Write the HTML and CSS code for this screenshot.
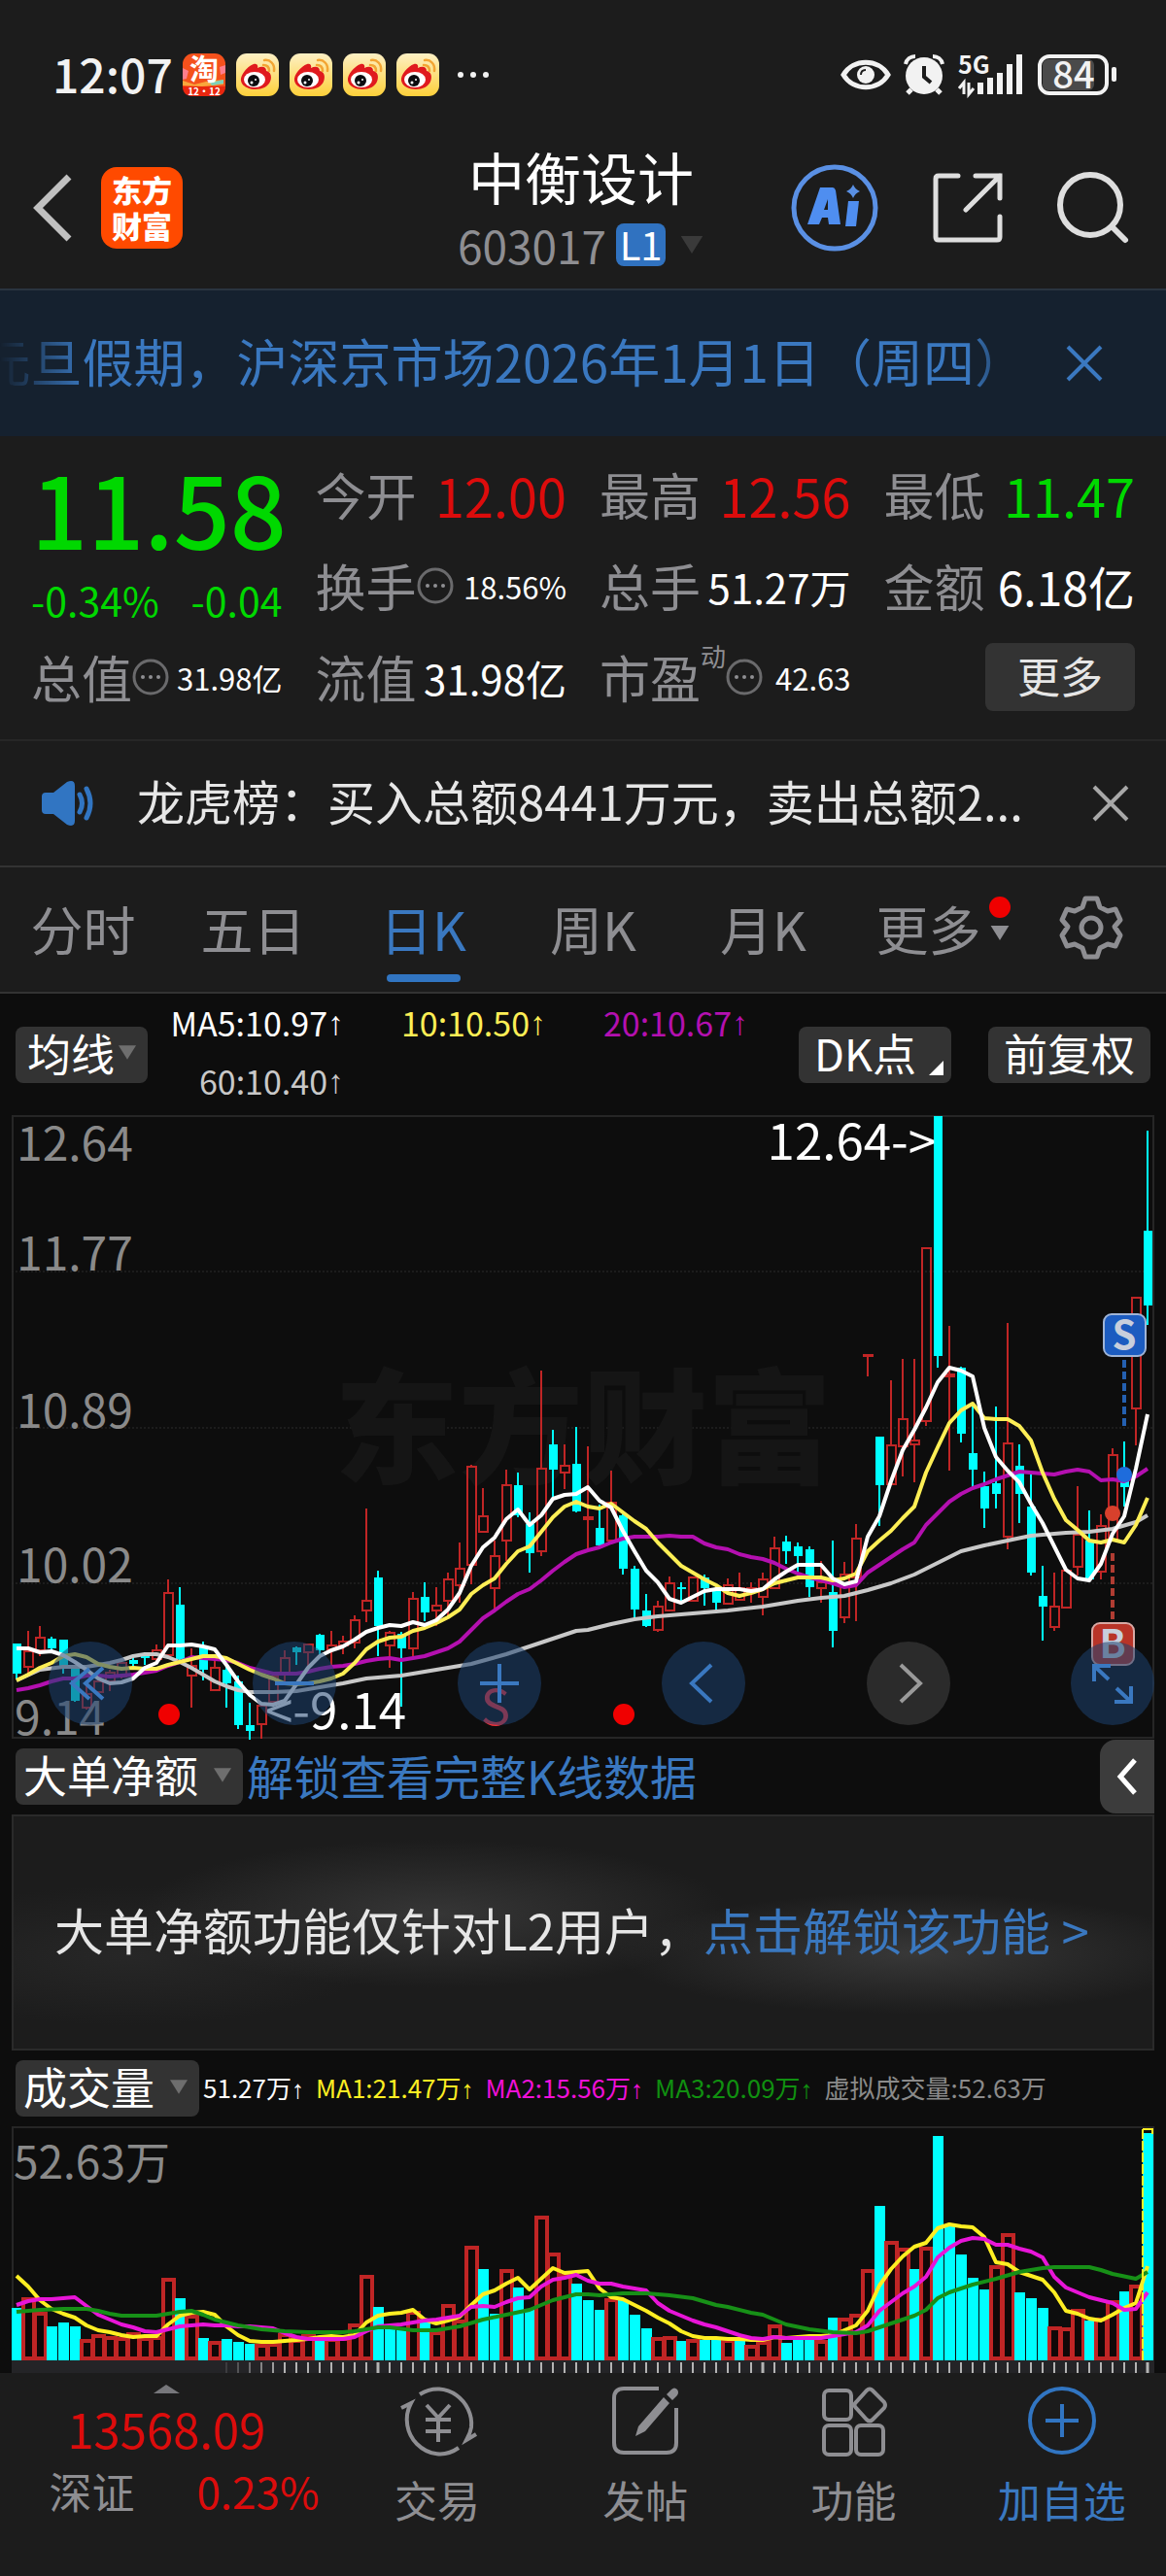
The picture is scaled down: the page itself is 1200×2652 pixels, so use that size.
FILE: index.html
```html
<!DOCTYPE html>
<html lang="zh-CN">
<head>
<meta charset="utf-8">
<meta name="viewport" content="width=device-width, initial-scale=1">
<title>中衡设计 603017</title>
<link rel="stylesheet" href="styles.css">
</head>
<body>
<svg class="defs" aria-hidden="true">
  <defs>
    <linearGradient id="gold" x1="0" y1="0" x2="0" y2="1"><stop offset="0" stop-color="#fdf0c4"/><stop offset="1" stop-color="#fdd03a"/></linearGradient>
    <symbol id="weibo" viewBox="0 0 44 44">
      <rect width="44" height="44" rx="11" fill="url(#gold)"/>
      <path d="M5 28C4 22 12 13 18 11c3-1 5 1 4 4 4-2 9-2 9 3 5 1 6 6 4 11-2 5-8 8-15 8S6 34 5 28z" fill="#e01a1e"/>
      <ellipse cx="19" cy="27" rx="11" ry="8" fill="#fff"/>
      <circle cx="18" cy="28" r="6" fill="#0c0c10"/><circle cx="16" cy="30" r="1.500" fill="#fff"/><circle cx="20" cy="27" r="1" fill="#fff"/>
      <path d="M29 7c6-1 11 4 10 11M28 12c4 0 6 2 6 6" fill="none" stroke="#f3a533" stroke-width="2.500" stroke-linecap="round"/>
    </symbol>
    <symbol id="info" viewBox="0 0 38 38"><circle cx="19" cy="19" r="17" fill="none" stroke="#6a6a6c" stroke-width="3"/><circle cx="11" cy="19" r="2" fill="#8e8e92"/><circle cx="19" cy="19" r="2" fill="#8e8e92"/><circle cx="27" cy="19" r="2" fill="#8e8e92"/></symbol>
    <symbol id="cross" viewBox="0 0 38 38"><path d="M2 2 36 36M36 2 2 36" fill="none" stroke="currentColor" stroke-width="4"/></symbol>
    <symbol id="caret" viewBox="0 0 20 16"><path d="M0 0h20L10 16z" fill="currentColor"/></symbol>
  </defs>
</svg>

<div class="status">
  <span class="clock">12:07</span>
  <div class="apps">
    <svg width="44" height="44" viewBox="0 0 44 44"><rect width="44" height="44" rx="11" fill="#f4511c"/><path d="M0 28 12 32 24 29 42 27v5L20 34 0 33z" fill="#f9a63c"/><path d="M28 30 42 27v4L30 33z" fill="#7fd0b8"/><path d="M0 15l6 3-2 8-4 1zM38 14l6-2v8l-5 2z" fill="#ff7d8c"/><path d="M0 34h44c0 7-4 10-11 10H11C4 44 0 41 0 34z" fill="#e8260f"/><text class="tao" x="22" y="27" text-anchor="middle">淘</text><text class="tao-day" x="22" y="43" text-anchor="middle">12·12</text></svg>
    <svg width="44" height="44"><use href="#weibo"/></svg>
    <svg width="44" height="44"><use href="#weibo"/></svg>
    <svg width="44" height="44"><use href="#weibo"/></svg>
    <svg width="44" height="44"><use href="#weibo"/></svg>
  </div>
  <svg class="dots" width="34" height="8" viewBox="0 0 34 8"><g fill="#f2f2f2"><circle cx="4" cy="4" r="3"/><circle cx="17" cy="4" r="3"/><circle cx="30" cy="4" r="3"/></g></svg>
  <div class="signals">
    <svg width="50" height="32" viewBox="0 0 50 32"><path d="M2 16C12-1 38-1 48 16 38 33 12 33 2 16z" fill="none" stroke="#f2f2f2" stroke-width="5"/><circle cx="25" cy="16" r="9" fill="#f2f2f2"/><path d="M20 16c0-3 2-5 5-5" stroke="#1c1c1c" stroke-width="2" fill="none"/></svg>
    <svg width="42" height="42" viewBox="0 0 42 42"><circle cx="21" cy="22" r="19" fill="#f2f2f2"/><path d="M2 10C3 5 7 2 12 2M40 10C39 5 35 2 30 2" stroke="#f2f2f2" stroke-width="4" fill="none"/><path d="M8 36l-4 4M34 36l4 4" stroke="#f2f2f2" stroke-width="5"/><path d="M21 12v11l7 6" stroke="#1c1c1c" stroke-width="4" fill="none"/></svg>
    <svg width="68" height="42" viewBox="0 0 68 42"><text class="net" x="0" y="20">5G</text><path d="M20 41V29h6v12zM30 41V24h6v17zM40 41V19h6v22zM50 41V10h6v31zM60 41V0h6v41z" fill="#f2f2f2"/><path d="M1 35l5-6v12M11 29v12l5-6" stroke="#f2f2f2" stroke-width="3" fill="none"/></svg>
    <svg width="82" height="42" viewBox="0 0 82 42"><rect x="5" y="5" width="53" height="32" rx="6" fill="#4a4a4a"/><rect x="2" y="2" width="69" height="38" rx="10" fill="none" stroke="#f2f2f2" stroke-width="4"/><rect x="76" y="13" width="5" height="15" rx="2" fill="#f2f2f2"/><text class="level" x="37" y="35" text-anchor="middle">84</text></svg>
  </div>
</div>

<header class="top">
  <div class="top-left">
    <button aria-label="返回"><svg width="40" height="70" viewBox="0 0 40 70"><path d="M37 3 5 35l32 32" fill="none" stroke="#c0c0c0" stroke-width="7"/></svg></button>
    <div class="logo"><span>东方</span><span>财富</span></div>
  </div>
  <div class="top-mid">
    <h1>中衡设计</h1>
    <div class="code"><span>603017</span><b>L1</b><svg width="26" height="18"><use href="#caret"/></svg></div>
  </div>
  <div class="top-right">
    <button aria-label="AI"><svg width="90" height="90" viewBox="0 0 90 90"><circle cx="45" cy="45" r="42" fill="none" stroke="#5a90e4" stroke-width="5"/><path fill-rule="evenodd" d="M30 24h13q2 0 3 3l5 35H39l-1-7h-6l-3 7H17zM38 36l-4 11h4z" fill="#4f8ef0"/><path d="M59 38h11l-3 26H56z" fill="#4f8ef0"/><path d="M64 21q2 5 7 7-5 2-7 7-2-5-7-7 5-2 7-7z" fill="#5a90e4"/></svg></button>
    <button aria-label="分享"><svg width="72" height="72" viewBox="0 0 72 72"><path d="M26 3H6Q3 3 3 6v60q0 3 3 3h60q3 0 3-3V45M44 3h25v23M69 3 34 38" fill="none" stroke="#dedede" stroke-width="5" stroke-linecap="round"/></svg></button>
    <button aria-label="搜索"><svg width="74" height="74" viewBox="0 0 74 74"><circle cx="34" cy="34" r="31" fill="none" stroke="#dedede" stroke-width="6"/><path d="M57 57 70 70" stroke="#dedede" stroke-width="6" stroke-linecap="round"/></svg></button>
  </div>
</header>

<div class="notice">
  <div class="ticker"><span>元旦假期，沪深京市场2026年1月1日（周四）</span></div>
  <button aria-label="关闭公告"><svg width="38" height="38"><use href="#cross"/></svg></button>
</div>

<section class="quote">
  <div class="price down"><strong>11.58</strong><div class="change"><span>-0.34%</span><span>-0.04</span></div></div>
  <div class="item"><span>今开</span><b class="xl up">12.00</b></div>
  <div class="item"><span>最高</span><b class="xl up">12.56</b></div>
  <div class="item"><span>最低</span><b class="xl down">11.47</b></div>
  <div class="item"><span>换手<svg width="38" height="38"><use href="#info"/></svg></span><b class="sm">18.56%</b></div>
  <div class="item"><span>总手</span><b class="md">51.27万</b></div>
  <div class="item"><span>金额</span><b class="lg">6.18亿</b></div>
  <div class="item"><span>总值<svg width="38" height="38"><use href="#info"/></svg></span><b class="sm">31.98亿</b></div>
  <div class="item"><span>流值</span><b class="md">31.98亿</b></div>
  <div class="item"><span>市盈<sup>动</sup><svg width="38" height="38"><use href="#info"/></svg></span><b class="sm">42.63</b></div>
  <div class="item end"><button class="more">更多</button></div>
</section>

<div class="news">
  <svg width="56" height="46" viewBox="0 0 56 46"><path d="M4 12h8L26 1q8-3 8 4v36q0 7-8 4L12 34H4q-4 0-4-4V16q0-4 4-4z" fill="#3175c2"/><path d="M39 14q5 9 0 18M46 8q8 15 0 30" fill="none" stroke="#3175c2" stroke-width="5" stroke-linecap="round"/></svg>
  <a href="#news">龙虎榜：买入总额8441万元，卖出总额2...</a>
  <button aria-label="关闭"><svg width="38" height="38"><use href="#cross"/></svg></button>
</div>

<nav class="tabs">
  <button>分时</button><button>五日</button><button class="on">日K</button><button>周K</button><button>月K</button>
  <button class="drop">更多<span class="mark"><i></i><svg width="20" height="15"><use href="#caret"/></svg></span></button>
  <button class="gear" aria-label="设置"><svg width="64" height="66" viewBox="0 0 64 66"><path d="M26 3h12l3 9 8 4 8-2 5 11-6 7 6 9-5 11-8-2-8 4-3 9H26l-3-9-8-4-8 2-5-11 6-9-6-7 5-11 8 2 8-4z" fill="none" stroke="#8e8e92" stroke-width="5" stroke-linejoin="round"/><circle cx="32" cy="33" r="10" fill="none" stroke="#8e8e92" stroke-width="5"/></svg></button>
</nav>

<main class="charts">
  <div class="ma-row">
    <button class="chip avg">均线<svg width="18" height="15"><use href="#caret"/></svg></button>
    <div class="ma"><span>MA5:10.97<i>↑</i></span><span class="yellow">10:10.50<i>↑</i></span><span class="purple">20:10.67<i>↑</i></span><span class="grey">60:10.40<i>↑</i></span></div>
    <button class="chip dk">DK点</button>
    <button class="chip">前复权</button>
  </div>

  <div class="kline">
    <svg id="kline" viewBox="0 0 1176 642" role="img" aria-label="日K线图"></svg>
    <div class="tools">
      <button aria-label="向前翻"><svg width="86" height="86" viewBox="0 0 86 86"><path d="M42 28 24 43l18 16M56 27 38 43l18 16"/></svg></button>
      <button aria-label="缩小"><svg width="86" height="86" viewBox="0 0 86 86"><path d="M23 43h40"/></svg></button>
      <button aria-label="放大"><svg width="86" height="86" viewBox="0 0 86 86"><path d="M23 43h40M43 23v40"/></svg></button>
      <button aria-label="左移"><svg width="86" height="86" viewBox="0 0 86 86"><path d="M51 24 31 43l20 19"/></svg></button>
      <button class="off" aria-label="右移"><svg width="86" height="86" viewBox="0 0 86 86"><path d="M35 24l20 19-20 19"/></svg></button>
      <button aria-label="全屏"><svg width="86" height="86" viewBox="0 0 86 86"><path d="M24 41V25h17M24 25l15 14M62 46v16H45M62 62 47 48"/></svg></button>
    </div>
  </div>

  <div class="sub-row flow">
    <button class="chip wide">大单净额<svg width="18" height="15"><use href="#caret"/></svg></button>
    <a href="#unlock">解锁查看完整K线数据</a>
    <button class="fold" aria-label="展开"><svg width="22" height="38" viewBox="0 0 22 38"><path d="M19 2 4 19l15 17" fill="none" stroke="#fff" stroke-width="5"/></svg></button>
  </div>
  <div class="lock"><span>大单净额功能仅针对L2用户，</span><a href="#level2">点击解锁该功能 &gt;</a></div>

  <div class="sub-row">
    <button class="chip wide">成交量<svg width="18" height="15"><use href="#caret"/></svg></button>
    <div class="vols"><span>51.27万<i>↑</i></span><span class="bright">MA1:21.47万<i>↑</i></span><span class="pink">MA2:15.56万<i>↑</i></span><span class="green">MA3:20.09万<i>↑</i></span><span class="dim">虚拟成交量:52.63万</span></div>
  </div>
  <svg id="volume" viewBox="0 0 1176 254" role="img" aria-label="成交量图"></svg>
</main>

<footer class="bottom">
  <a class="index" href="#index"><svg class="tip" width="27" height="9" viewBox="0 0 27 9"><path d="M0 9 13 0l14 9z" fill="#77777b"/></svg><b>13568.09</b><span class="pair"><span>深证</span><em>0.23%</em></span></a>
  <a href="#trade"><svg width="78" height="74" viewBox="0 0 78 74"><g fill="none" stroke="#8e8e92" stroke-width="4"><path d="M21 10C48-7 77 18 74 44 73 50 71 53 69 57l10-6M2 24l10-5C4 34 8 51 18 61c12 12 29 14 43 4M28 21l12 13 12-13M40 34v25M27 36h26M27 48h26"/></g></svg><span>交易</span></a>
  <a href="#post"><svg width="72" height="74" viewBox="0 0 72 74"><path d="M50 4H14Q4 4 4 14v46q0 10 10 10h44q10 0 10-10V24" fill="none" stroke="#8e8e92" stroke-width="4"/><path d="M55 13l6 6-25 29-10 5 3-10zM58 10l5-5q3-3 6 0 2 3 0 6l-5 5z" fill="#8e8e92"/></svg><span>发帖</span></a>
  <a href="#tools"><svg width="68" height="74" viewBox="0 0 68 74"><g fill="none" stroke="#8e8e92" stroke-width="4"><rect x="3" y="6" width="28" height="30" rx="5"/><rect x="3" y="42" width="28" height="30" rx="5"/><rect x="36" y="42" width="28" height="30" rx="5"/><path d="M47 6q3-3 6 0l12 12q2 3 0 6L53 36q-3 3-6 0L36 24q-3-3 0-6z"/></g></svg><span>功能</span></a>
  <a class="add" href="#add"><svg width="72" height="74" viewBox="0 0 72 74"><g fill="none" stroke="#3175c2" stroke-width="4"><circle cx="36" cy="37" r="33"/><path d="M19 37h34M36 20v34"/></g></svg><span>加自选</span></a>
</footer>
<script src="charts.js"></script>
</body>
</html>
```
FILE: styles.css
```css
* { box-sizing: border-box; }
body { margin: 0; background: #1c1c1c; color: #e6e6e6; font-family: "Noto Sans CJK SC", "Noto Sans", sans-serif; }
button { margin: 0; padding: 0; border: 0; background: none; color: inherit; font: inherit; display: flex; align-items: center; justify-content: center; }
a { color: inherit; text-decoration: none; }
b, em, i, strong { font-weight: 400; font-style: normal; }
svg { display: block; flex: none; overflow: visible; }
.defs { width: 0; height: 0; position: absolute; overflow: hidden; }
.up { color: #dc0c0c; }
.down { color: #00d800; }

.status { display: flex; align-items: center; height: 130px; padding: 24px 50px 0 54px; color: #f2f2f2; }
.clock { padding-bottom: 4px; font-size: 48px; font-weight: 500; line-height: 60px; }
.apps { display: flex; gap: 11px; margin-left: 10px; }
.tao { font-size: 30px; font-weight: 700; fill: #fff; }
.tao-day { font-size: 10px; font-weight: 700; fill: #fff; }
.dots { margin-left: 18px; }
.signals { display: flex; align-items: center; gap: 14px; margin-left: auto; }
.net { font-size: 25px; font-weight: 700; fill: #f2f2f2; }
.level { font-size: 38px; font-weight: 500; fill: #f2f2f2; }

.top { display: grid; grid-template-columns: 1fr auto 1fr; align-items: center; height: 169px; padding: 0 38px 0 34px; border-bottom: 2px solid #2a3440; }
.top-left { display: flex; align-items: center; gap: 30px; }
.logo { width: 84px; height: 84px; padding-bottom: 2px; border-radius: 16px; background: #ff4a00; color: #fff; font-size: 31px; font-weight: 900; line-height: 37px; display: flex; flex-direction: column; align-items: center; justify-content: center; }
h1 { margin: 0; font-size: 58px; font-weight: 400; line-height: 72px; color: #fff; text-align: center; }
.top-mid { padding-top: 4px; }
.code { display: flex; align-items: center; justify-content: center; line-height: 70px; font-size: 46px; color: #8e8e92; }
.code b { width: 51px; height: 44px; margin: 0 14px 0 10px; border-radius: 8px; background: #3072c0; color: #fff; font-size: 40px; line-height: 42px; text-align: center; }
.code svg { color: #3a3a3a; }
.top-right { display: flex; align-items: center; justify-content: flex-end; gap: 56px; }

.notice { display: flex; align-items: center; justify-content: space-between; height: 150px; padding-right: 65px; background: #15212f; color: #3a78c0; }
.ticker { flex: 0 1 1056px; margin-right: 40px; padding-bottom: 6px; min-width: 0; display: flex; justify-content: flex-end; overflow: hidden; white-space: nowrap; font-size: 53px; line-height: 80px; mask-image: linear-gradient(to right, transparent, #000 90px, #000 calc(100% - 60px), transparent); }

.quote { display: grid; grid-template-columns: repeat(4, minmax(0, 1fr)); grid-auto-rows: 94px; column-gap: 34px; padding: 13px 32px 17px; white-space: nowrap; }
.price { grid-row: span 2; text-align: right; }
.price strong { display: block; font-size: 102px; font-weight: 500; line-height: 120px; }
.change { display: flex; justify-content: space-between; font-size: 41px; line-height: 70px; }
.item { display: flex; align-items: center; justify-content: space-between; }
.item > span { display: flex; align-items: center; font-size: 52px; line-height: 64px; color: #8e8e92; }
.item sup { align-self: flex-start; font-size: 26px; line-height: 20px; }
.item b:not(.up):not(.down) { color: #fff; }
.end { justify-content: flex-end; }
.xl { font-size: 54px; }
.lg { font-size: 48px; }
.md { font-size: 42px; }
.sm { font-size: 31px; }
.more { width: 154px; height: 70px; padding-bottom: 4px; border-radius: 8px; background: #333; font-size: 44px; line-height: 60px; }

.news { display: flex; align-items: center; height: 132px; padding: 0 38px 0 43px; border-top: 2px solid #262626; border-bottom: 2px solid #333; font-size: 49px; line-height: 70px; }
.news a { flex: 1; margin-left: 42px; padding-bottom: 6px; white-space: nowrap; overflow: hidden; }
.news button { color: #a8a8a8; }

.tabs { display: grid; grid-template-columns: repeat(6, 7fr) 6fr; height: 130px; border-bottom: 2px solid #333; font-size: 54px; color: #8e8e92; }
.tabs button { padding: 0 4px 4px 0; }
.tabs .on { position: relative; color: #3a78c0; }
.tabs .on::after { content: ""; position: absolute; bottom: 10px; width: 76px; height: 8px; border-radius: 4px; background: #3175c2; }
.tabs .drop { padding-left: 20px; }
.mark { display: flex; flex-direction: column; align-items: center; gap: 8px; margin: 0 0 20px 8px; }
.mark i { width: 22px; height: 22px; border-radius: 50%; background: #f00000; }

.charts { padding: 0 12px; background: #0d0d0d; }
.chip { height: 58px; padding: 0 16px 4px; border-radius: 8px; background: #333; color: #fff; font-size: 45px; line-height: 54px; white-space: nowrap; }
.chip svg { margin-left: 4px; color: #6e6e6e; }
.chip.avg { padding: 0 12px 4px; }
.chip.wide { padding: 0 12px 4px 8px; }
.chip.wide svg { margin-left: 16px; }
.ma-row { display: flex; align-items: center; height: 125px; padding: 0 4px; }
.ma { flex: 1; display: grid; grid-template-columns: 202px 208px 208px; padding-bottom: 6px; font-size: 34px; line-height: 60px; color: #fff; }
.ma span { display: flex; justify-content: flex-end; }
.ma i, .vols i { font-family: "Liberation Sans", Arial, sans-serif; }
.ma .yellow { color: #fdee55; }
.ma .purple { color: #b410b0; }
.ma .grey { color: #c8c8c8; }
.chip.dk { position: relative; margin-right: 38px; padding: 0 36px 4px 16px; }
.dk::after { content: ""; position: absolute; right: 8px; bottom: 8px; border-left: 15px solid transparent; border-bottom: 15px solid #fff; }

.kline { position: relative; }
#kline, #volume { width: 100%; height: auto; }
#kline text { font-size: 48px; }
#volume text { font-size: 46px; }
#kline .callout { font-size: 51px; }
#kline .brand { font-size: 128px; font-weight: 900; fill: #151515; }
#kline .badge { font-size: 40px; font-weight: 700; fill: #c8cfdc; }
.tools { position: absolute; left: 38px; right: 0; bottom: 14px; display: flex; justify-content: space-between; }
.tools button { width: 86px; height: 86px; border-radius: 50%; background: rgba(30, 66, 112, 0.55); }
.tools path { fill: none; stroke: #3a78c0; stroke-width: 4; }
.tools .off { background: #2b2b2b; }
.tools .off path { stroke: #9a9a9a; }

.sub-row { display: flex; align-items: center; height: 78px; padding-left: 4px; }
.flow a { margin-left: 4px; padding-bottom: 4px; font-size: 48px; line-height: 60px; color: #3a78c0; }
.fold { width: 56px; height: 76px; margin-left: auto; border-radius: 16px 0 0 16px; background: #3c3c3c; }
.lock { display: flex; align-items: center; height: 243px; padding: 0 0 8px 42px; border: 2px solid #2a2a2a; font-size: 51px; white-space: nowrap; background: radial-gradient(ellipse 26% 32% at 37% 42%, #363636, rgba(54, 54, 54, 0)), radial-gradient(ellipse 26% 26% at 79% 59%, #383838, rgba(56, 56, 56, 0)), radial-gradient(ellipse 22% 30% at 10% 60%, #272727, rgba(39, 39, 39, 0)), #1c1c1c; }
.lock a { color: #3a78c0; }
.vols { display: flex; gap: 12px; margin-left: 4px; padding-bottom: 4px; font-size: 26px; color: #fff; white-space: nowrap; }
.vols .bright { color: #ffee22; }
.vols .pink { color: #f010d8; }
.vols .green { color: #109010; }
.vols .dim { color: #8a8a8a; }

.bottom { display: grid; grid-template-columns: 8fr repeat(4, 5fr); height: 210px; padding-top: 12px; font-size: 44px; line-height: 52px; color: #8e8e92; }
.bottom a { display: flex; flex-direction: column; align-items: center; gap: 18px; }
.bottom .index { gap: 0; color: #dc0c0c; }
.index b { margin-top: 6px; font-size: 49px; line-height: 60px; }
.pair { display: flex; gap: 64px; margin: 8px 0 0 36px; }
.pair span { color: #8e8e92; }
.bottom .add { color: #3a78c0; }
```
FILE: charts.js
```js
// Each day: body top, body bottom, wick top, wick bottom, on the price scale below.
const SCALE_TOP = 42;
const SCALE_BOTTOM = 1478;
const days = `c1259,1327,1259,1338 r1276,1312,1230,1330 r1245,1275,1218,1287 c1247,1270,1242,1275 c1250,1313,1250,1328 c1315,1390,1315,1392 r1375,1407,1350,1410 r1345,1370,1340,1380 r1325,1345,1320,1368 r1303,1335,1300,1340 c1297,1306,1283,1315 c1281,1293,1278,1308 r1275,1295,1260,1300 r1142,1285,1110,1290 c1168,1295,1128,1300 r1310,1333,1270,1407 c1267,1318,1255,1343 r1315,1367,1290,1367 c1318,1350,1310,1407 c1345,1447,1333,1455 c1447,1459,1395,1480 r1402,1445,1395,1478 r1335,1393,1330,1400 r1293,1325,1275,1345 c1268,1278,1266,1308 r1261,1278,1258,1310 c1239,1275,1236,1287 r1262,1272,1230,1310 r1254,1263,1240,1283 r1204,1256,1193,1270 r1159,1182,947,1210 c1107,1218,1090,1287 r1233,1264,1230,1315 c1235,1270,1232,1403 r1155,1270,1140,1288 c1152,1187,1117,1208 r1171,1182,1128,1218 r1110,1160,1095,1198 r1086,1124,1025,1165 r850,1078,846,1122 r966,1000,900,1004 r1057,1130,1020,1180 r893,1022,857,1068 c894,962,865,968 c983,1049,955,1095 r856,1046,630,1057 c800,857,766,923 r848,864,800,902 c844,954,758,957 r967,971,803,1040 c991,1032,938,1040 r933,1020,860,1025 c963,1086,960,1099 c1087,1181,1080,1202 c1182,1218,1145,1220 r1173,1228,1160,1232 r1119,1183,1104,1185 c1128,1132,1118,1160 r1107,1160,1103,1160 c1105,1130,1100,1170 c1132,1164,1130,1188 r1123,1166,1108,1168 r1130,1158,1095,1160 r1130,1140,1117,1165 r1110,1150,1095,1193 r1040,1130,1013,1132 c1024,1046,1009,1075 c1034,1057,1026,1095 c1042,1128,1035,1150 r1117,1130,1067,1165 c1140,1230,1022,1268 r1100,1199,1070,1211 r1016,1105,984,1206 r592,594,592,642 c782,894,782,988 r802,890,652,892 r740,803,602,874 r790,800,602,886 r346,746,346,756 c42,595,42,622 r638,642,527,860 c623,774,620,795 c820,857,710,900 c895,948,861,992 c889,914,712,948 r798,1013,520,1042 c849,914,799,980 c942,1095,865,1102 c1149,1173,1080,1251 r1173,1220,1095,1230 r1090,1175,1085,1178 r1008,1082,895,1102 c1022,1110,952,1112 r987,1092,960,1111 r824,1018,808,1020 c880,897,792,943 r461,717,460,802 c306,478,76,523`.split(/\s+/);

const priceLines = {
  '#c8c8c8': '0:1343 2:1318 4:1312 6:1312 7:1308 8:1304 9:1296 10:1288 11:1284 12:1284 13:1290 14:1300 15:1315 16:1330 17:1345 18:1358 19:1366 20:1370 22:1370 24:1368 26:1359 28:1350 30:1340 33:1333 36:1320 39:1305 42:1282 45:1256 47:1238 48:1230 49:1226 51:1213 53:1203 55:1195 58:1188 61:1182 64:1173 67:1160 69:1153 71:1148 73:1135 75:1120 77:1100 79:1072 81:1046 83:1033 85:1020 87:1010 90:1004 92:1000 94:993 96:978 97:963',
  '#b410b0': '1367 1362 1355 1346 1339 1338 1333 1333 1335 1333 1330 1326 1321 1310 1300 1290 1291 1294 1297 1304 1315 1322 1328 1329 1329 1323 1316 1312 1309 1305 1299 1295 1293 1297 1292 1287 1279 1270 1255 1228 1200 1183 1162 1145 1133 1113 1090 1070 1053 1044 1037 1025 1016 1012 1013 1013 1010 1011 1013 1027 1037 1041 1052 1060 1064 1073 1085 1097 1105 1113 1120 1128 1125 1095 1078 1060 1042 1025 985 958 932 914 900 890 880 870 863 864 866 869 862 857 862 881 880 884 873 855',
  '#fdee55': '1343 1330 1315 1303 1288 1283 1290 1305 1312 1317 1315 1316 1317 1308 1302 1295 1288 1287 1291 1305 1320 1330 1338 1350 1352 1350 1345 1340 1328 1303 1272 1255 1245 1242 1230 1222 1212 1197 1180 1145 1125 1108 1075 1045 1035 1000 968 942 932 942 947 936 955 977 993 1025 1053 1080 1095 1110 1125 1143 1148 1143 1132 1120 1112 1105 1106 1106 1112 1108 1098 1045 1022 998 970 942 865 805 750 720 705 738 740 741 757 790 865 925 973 997 1022 1026 1018 1026 985 922',
  '#ffffff': '1269 1269 1278 1277 1285 1300 1318 1338 1350 1349 1338 1315 1303 1264 1262 1261 1265 1273 1308 1345 1378 1398 1400 1390 1352 1315 1288 1275 1265 1250 1232 1222 1216 1218 1209 1215 1205 1180 1142 1080 1036 1014 972 949 985 962 924 915 914 897 930 945 998 1045 1090 1118 1155 1164 1150 1137 1133 1134 1134 1137 1132 1110 1092 1077 1077 1078 1108 1122 1115 1012 965 885 812 765 715 655 622 628 642 760 828 860 887 935 980 1035 1088 1108 1112 1075 1005 965 855 730'
};

// Volume bars: tops on a scale whose base is 775.
const volumes = 'c615 r583 r628 c672 c660 c671 r712 r696 r703 r705 r690 r706 r702 r523 c585 r637 c709 r717 c712 c719 c726 r727 r723 r692 r712 r697 c716 r708 r706 r662 r512 c612 c682 c680 r623 c660 r688 r602 r650 r422 c496 c633 r494 c552 c620 r331 r445 r510 c540 c591 c622 r586 c590 c636 c678 r705 r701 c717 r710 c714 c714 r711 c716 r728 r716 r665 c722 c713 c713 r714 c645 r646 r632 r494 c299 r408 r430 c496 r426 c83 c363 c449 c521 c557 r482 r385 c567 c584 c615 r672 r676 r617 c653 r645 r590 c564 r543 c76'.split(' ');

const volumeLines = {
  '#ffee22': '517 550 592 618 632 645 668 683 691 700 704 703 702 665 638 630 628 636 672 698 717 721 721 717 715 712 705 703 704 698 660 640 634 629 622 652 664 655 643 605 572 560 540 522 558 525 492 507 503 500 555 583 587 606 625 645 663 688 703 709 709 710 710 713 713 705 707 706 701 702 698 685 670 625 545 495 455 427 413 370 358 362 367 395 473 480 503 515 527 567 623 633 647 655 637 615 600 487',
  '#e815d8': '605 595 588 587 584 581 608 635 652 666 676 688 691 682 673 670 667 668 670 671 673 675 679 692 705 711 712 712 712 706 688 672 669 667 660 655 652 645 638 612 610 612 597 584 582 550 527 522 514 530 541 540 548 556 562 600 625 640 655 667 676 688 698 708 711 706 708 708 708 708 702 695 690 668 625 598 570 548 520 460 428 409 399 402 419 421 432 442 460 520 552 568 582 591 600 620 617 568',
  '#179017': '0:627 2:621 4:618 6:617 7:623 8:633 9:638 10:640 12:640 13:633 14:628 15:625 16:637 17:650 19:668 21:680 23:687 25:690 28:691 29:688 30:682 31:675 32:676 34:684 36:684 38:673 40:650 42:636 44:621 46:592 48:574 49:572 50:576 52:571 54:571 56:576 58:584 60:607 61:612 63:630 64:637 66:665 68:681 70:689 72:692 73:687 75:662 77:638 78:622 79:585 80:568 82:544 84:526 86:503 88:491 89:489 92:490 93:497 94:511 96:525 97:505'
};

const RED = '#c02525';
const CYAN = '#00ffff';
const x = i => 5 + i * 12;
const priceY = v => Math.round((v - SCALE_TOP) / (SCALE_BOTTOM - SCALE_TOP) * 641) + 1;
const volumeY = v => Math.round(v / 3) - 18;

function lines(set, y, width) {
  return Object.entries(set).map(([color, data]) => {
    const pts = data.split(' ').map((p, i) => {
      const [a, b] = p.split(':').map(Number);
      return b === undefined ? `${x(i)},${y(a)}` : `${x(a)},${y(b)}`;
    }).join(' ');
    return `<polyline points="${pts}" fill="none" stroke="${color}" stroke-width="${width}" stroke-linejoin="round"/>`;
  }).join('');
}

function drawKline() {
  let s = '<rect x="1" y="1" width="1174" height="640" fill="none" stroke="#262626" stroke-width="2"/>';
  for (const y of [161, 322, 482]) s += `<path d="M0 ${y}H1176" stroke="#2c2c2c" stroke-width="1" stroke-dasharray="2 2"/>`;
  s += '<text class="brand" x="332" y="370">东方财富</text>';
  days.forEach((d, i) => {
    const [top, bottom, high, low] = d.slice(1).split(',').map(v => priceY(+v));
    const cx = x(i);
    if (d[0] === 'c') {
      s += `<path d="M${cx} ${high}V${low}" stroke="${CYAN}" stroke-width="2"/><rect x="${cx - 4}" y="${top}" width="9" height="${Math.max(2, bottom - top)}" fill="${CYAN}"/>`;
    } else {
      s += `<path d="M${cx} ${high}V${top}M${cx} ${bottom}V${low}" stroke="${RED}" stroke-width="2"/><rect x="${cx - 4}" y="${top}" width="9" height="${Math.max(1, bottom - top)}" fill="none" stroke="${RED}" stroke-width="2"/>`;
    }
  });
  s += lines(priceLines, priceY, 4);
  s += '<g fill="#8a8a8a"><text x="5" y="47">12.64</text><text x="5" y="160">11.77</text><text x="5" y="322">10.89</text><text x="5" y="481">10.02</text><text x="3" y="638">9.14</text></g>';
  s += '<g fill="#fff"><text class="callout" x="951" y="46" text-anchor="end">12.64-&gt;</text><text class="callout" x="261" y="632">&lt;-9.14</text></g>';
  s += '<g fill="#f00000"><circle cx="162" cy="617" r="11"/><circle cx="630" cy="617" r="11"/></g><text class="callout" x="498" y="628" text-anchor="middle" fill="#f03038">S</text>';
  s += '<path d="M1145 252V321" stroke="#2460b0" stroke-width="4" stroke-dasharray="8 4"/><circle cx="1145" cy="370" r="8" fill="#1e6cdc"/><rect x="1124" y="205" width="43" height="43" rx="8" fill="#1c5cc0" stroke="#9fb4d6" stroke-width="2"/><text class="badge" x="1145" y="241" text-anchor="middle">S</text>';
  s += '<path d="M1133 451V520" stroke="#b03c32" stroke-width="4" stroke-dasharray="8 4"/><circle cx="1133" cy="410" r="8" fill="#d8402c"/><rect x="1112" y="523" width="43" height="43" rx="8" fill="#b83428" stroke="#d8a8a4" stroke-width="2"/><text class="badge" x="1133" y="559" text-anchor="middle">B</text>';
  document.getElementById('kline').innerHTML = s;
}

function drawVolume() {
  let s = '<rect x="1" y="1" width="1174" height="252" fill="none" stroke="#262626" stroke-width="2"/><rect y="241" width="1176" height="13" fill="#242427"/>';
  volumes.forEach((v, i) => {
    const y = volumeY(+v.slice(1));
    if (v[0] === 'c') s += `<rect x="${x(i) - 5}" y="${y}" width="11" height="${241 - y}" fill="${CYAN}"/>`;
    else s += `<rect x="${x(i) - 5}" y="${y + 2}" width="11" height="${237 - y}" fill="#110808" stroke="${RED}" stroke-width="4"/>`;
  });
  s += lines(volumeLines, volumeY, 4);
  s += '<path d="M1164 241V3" stroke="#ffee22" stroke-width="2" stroke-dasharray="10 2" fill="none"/><path d="M1164 3h10v5" stroke="#ffee22" stroke-width="2" fill="none"/>';
  for (let i = 18; i < 98; i++) {
    const wide = i === 31 || i === 64 || i === 97;
    s += `<path d="M${x(i)} 243v11" stroke="#b4b4b4" stroke-width="${wide ? 3 : 2}" opacity="${Math.min(1, (i - 17) / 6)}"/>`;
  }
  s += '<text x="2" y="54" fill="#8a8a8a">52.63万</text>';
  document.getElementById('volume').innerHTML = s;
}

drawKline();
drawVolume();
```
